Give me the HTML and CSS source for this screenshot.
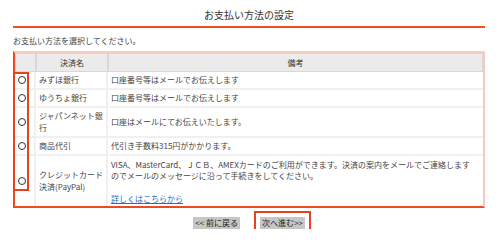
FILE: index.html
```html
<!doctype html>
<html lang="ja">
  <head>
    <meta charset="UTF-8" />
    <meta name="viewport" content="width=device-width, initial-scale=1.0" />
    <title>お支払い方法の設定</title>
    <link rel="stylesheet" href="styles.css">
  </head>
  <body>
    <div class="page">
      <h1 class="title">お支払い方法の設定</h1>
      <p class="lead">お支払い方法を選択してください。</p>

      <div class="pay-wrap">
        <table class="pay-table">
          <colgroup>
            <col class="col-radio" />
            <col class="col-name" />
            <col />
          </colgroup>
          <tr>
            <th></th>
            <th>決済名</th>
            <th>備考</th>
          </tr>
          <tr>
            <td class="radio-cell"><input type="radio" name="pay" value="mizuho" /></td>
            <td>みずほ銀行</td>
            <td>口座番号等はメールでお伝えします</td>
          </tr>
          <tr>
            <td class="radio-cell"><input type="radio" name="pay" value="yucho" /></td>
            <td>ゆうちょ銀行</td>
            <td>口座番号等はメールでお伝えします</td>
          </tr>
          <tr>
            <td class="radio-cell"><input type="radio" name="pay" value="japannet" /></td>
            <td>ジャパンネット銀行</td>
            <td>口座はメールにてお伝えいたします。</td>
          </tr>
          <tr>
            <td class="radio-cell"><input type="radio" name="pay" value="cod" /></td>
            <td>商品代引</td>
            <td>代引き手数料315円がかかります。</td>
          </tr>
          <tr>
            <td class="radio-cell"><input type="radio" name="pay" value="paypal" /></td>
            <td>クレジットカード決済(PayPal)</td>
            <td class="credit-note">
              <p>VISA、MasterCard、ＪＣＢ、AMEXカードのご利用ができます。決済の案内をメールでご連絡します<br>のでメールのメッセージに沿って手続きをしてください。</p>
              <a href="#" class="more-link">詳しくはこちらから</a>
            </td>
          </tr>
        </table>
        <!-- highlight round the radio column -->
        <div class="mark-radios"></div>
      </div>

      <div class="buttons">
        <button class="btn">&lt;&lt; 前に戻る</button>
        <button class="btn btn-next">次へ進む&gt;&gt;</button>
      </div>
    </div>
  </body>
</html>
```

FILE: styles.css
```css
body {
  margin: 0;
  background-color: white;
  color: #444;
  font-family: "Noto Sans CJK JP", "DejaVu Sans", sans-serif;
  font-size: 8px;
}
.page {
  width: 472px;
  margin-left: 13px;
}
.title {
  margin: 0;
  padding: 9px 0 5px;
  font-size: 10px;
  font-weight: normal;
  line-height: 12px;
  color: #333;
  text-align: center;
  border-bottom: 2px solid #f0501e;
}
.lead {
  margin: 8px 0 5px;
  line-height: 10px;
}
.pay-wrap {
  position: relative;
}
.pay-table {
  width: 100%;
  border-collapse: separate;
  border-spacing: 0;
  border-top: 2px solid #f8cdc1;
  border-right: 2px solid #f5c9bc;
  border-left: 2px solid #ee4b22;
  border-bottom: 2px solid #ee4b22;
}
.col-radio {
  width: 21px;
}
.col-name {
  width: 72px;
}
.pay-table th {
  background-color: #ebebeb;
  border: 1px solid #d8d8d8;
  padding: 2px 3px;
  line-height: 13px;
  font-weight: normal;
  color: #333;
}
.pay-table td {
  padding: 2px 3px;
  line-height: 12px;
  vertical-align: middle;
  border-bottom: 2px solid #f0f0f0;
}
.pay-table tr:last-child td {
  border-bottom: none;
}
.pay-table td:not(:last-child) {
  border-right: 2px solid #f0f0f0;
}
.radio-cell {
  padding: 0 0 0 3px !important;
}
.radio-cell input {
  appearance: none;
  display: block;
  width: 8px;
  height: 8px;
  margin: 0;
  border: 1.5px solid #333;
  border-radius: 50%;
  background: white;
  box-sizing: border-box;
}
.credit-note {
  line-height: 11px !important;
  padding-top: 3px !important;
}
.credit-note p {
  margin: 0;
  white-space: nowrap;
}
.more-link {
  display: inline-block;
  margin-top: 12px;
  color: #1a6fc8;
}
.mark-radios {
  position: absolute;
  left: 0;
  top: 21px;
  width: 16px;
  height: 119px;
  border: 2px solid #e8421c;
  box-sizing: border-box;
}
.buttons {
  display: flex;
  justify-content: center;
  gap: 20px;
  margin-top: 9px;
}
.btn {
  font-family: inherit;
  font-size: 8px;
  line-height: 10px;
  padding: 1px 2px;
  border: none;
  background-color: #c6c6c6;
  color: #222;
}
.btn-next {
  outline: 2px solid #e8421c;
  outline-offset: 4px;
}
```
